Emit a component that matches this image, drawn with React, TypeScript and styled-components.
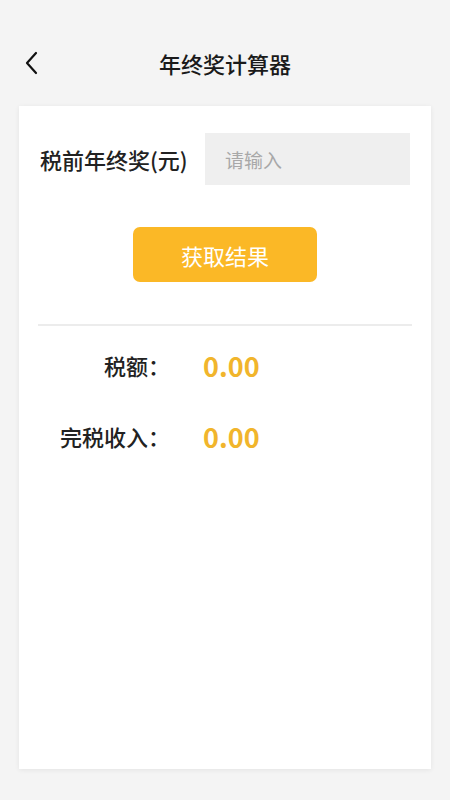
import React from 'react';
import styled, { createGlobalStyle } from 'styled-components';

const GlobalStyle = createGlobalStyle`
  html, body {
    margin: 0;
    padding: 0;
    background: #f4f4f4;
    font-family: "Noto Sans CJK SC", "Noto Sans", sans-serif;
  }
`;

const Page = styled.div`
  width: 450px;
  height: 800px;
  display: flex;
  flex-direction: column;
  background: #f4f4f4;
`;

const Header = styled.div`
  display: grid;
  grid-template-columns: 1fr auto 1fr;
  align-items: center;
  height: 46px;
  margin-top: 40px;
  margin-bottom: 20px;
`;

const BackButton = styled.button`
  justify-self: start;
  display: flex;
  align-items: center;
  margin-left: 20px;
  padding: 4px;
  border: none;
  background: transparent;
`;

const Title = styled.h1`
  margin: 0;
  font-size: 22px;
  font-weight: 500;
  color: #1a1a1a;
  letter-spacing: 0;
`;

const Card = styled.div`
  margin: 0 19px;
  height: 663px;
  box-sizing: border-box;
  padding: 27px 21px 0;
  background: #fff;
  box-shadow: 0 1px 5px rgba(0, 0, 0, 0.07);
  display: flex;
  flex-direction: column;
`;

const InputRow = styled.div`
  display: flex;
  align-items: center;
  justify-content: space-between;
`;

const Label = styled.span`
  font-size: 22px;
  font-weight: 500;
  color: #222;
`;

const Input = styled.input`
  width: 205px;
  height: 52px;
  box-sizing: border-box;
  padding: 0 20px;
  border: none;
  outline: none;
  background: #efefef;
  font-family: inherit;
  font-size: 19px;
  color: #222;

  &::placeholder {
    color: #a8a8a8;
  }
`;

const SubmitButton = styled.button`
  align-self: center;
  width: 184px;
  height: 55px;
  margin-top: 42px;
  border: none;
  border-radius: 7px;
  background: #fbb826;
  color: #fff;
  font-family: inherit;
  font-size: 22px;
  font-weight: 400;
`;

const Divider = styled.hr`
  height: 2px;
  margin: 42px -2px 14px;
  border: none;
  background: #ececec;
`;

const ResultList = styled.div`
  display: grid;
  grid-template-columns: 130px 1fr;
  grid-auto-rows: 50px;
  row-gap: 21px;
  column-gap: 33px;
  align-items: center;
`;

const ResultLabel = styled.span`
  justify-self: end;
  font-size: 22px;
  font-weight: 500;
  color: #222;
`;

const ResultValue = styled.span`
  font-size: 27px;
  font-weight: 700;
  color: #f1b52c;
`;

const results = [
  { label: '税额：', value: '0.00' },
  { label: '完税收入：', value: '0.00' },
];

const App: React.FC = () => (
  <Page>
    <GlobalStyle />
    <Header>
      <BackButton type="button" aria-label="返回">
        <svg width="16" height="24" viewBox="0 0 16 24" fill="none">
          <polyline
            points="12,2 3,12 12,22"
            stroke="#111"
            strokeWidth="2.2"
            strokeLinecap="round"
            strokeLinejoin="round"
          />
        </svg>
      </BackButton>
      <Title>年终奖计算器</Title>
      <div />
    </Header>
    <Card>
      <InputRow>
        <Label>税前年终奖(元)</Label>
        <Input placeholder="请输入" />
      </InputRow>
      <SubmitButton type="button">获取结果</SubmitButton>
      <Divider />
      <ResultList>
        {results.map((r) => (
          <React.Fragment key={r.label}>
            <ResultLabel>{r.label}</ResultLabel>
            <ResultValue>{r.value}</ResultValue>
          </React.Fragment>
        ))}
      </ResultList>
    </Card>
  </Page>
);

export default App;
